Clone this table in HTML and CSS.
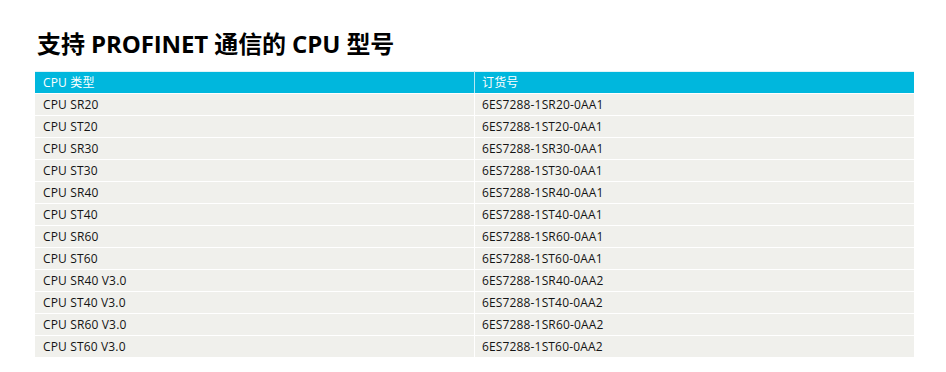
FILE: index.html
```html
<!DOCTYPE html>
<html lang="zh">
<head>
<meta charset="utf-8">
<link rel="stylesheet" href="styles.css">
</head>
<body>
<div class="page">
  <h1 class="title">支持 PROFINET 通信的 CPU 型号</h1>
  <table class="cpu-table">
    <thead>
      <tr><th>CPU 类型</th><th>订货号</th></tr>
    </thead>
    <tbody>
      <tr><td>CPU SR20</td><td>6ES7288-1SR20-0AA1</td></tr>
      <tr><td>CPU ST20</td><td>6ES7288-1ST20-0AA1</td></tr>
      <tr><td>CPU SR30</td><td>6ES7288-1SR30-0AA1</td></tr>
      <tr><td>CPU ST30</td><td>6ES7288-1ST30-0AA1</td></tr>
      <tr><td>CPU SR40</td><td>6ES7288-1SR40-0AA1</td></tr>
      <tr><td>CPU ST40</td><td>6ES7288-1ST40-0AA1</td></tr>
      <tr><td>CPU SR60</td><td>6ES7288-1SR60-0AA1</td></tr>
      <tr><td>CPU ST60</td><td>6ES7288-1ST60-0AA1</td></tr>
      <tr><td>CPU SR40 V3.0</td><td>6ES7288-1SR40-0AA2</td></tr>
      <tr><td>CPU ST40 V3.0</td><td>6ES7288-1ST40-0AA2</td></tr>
      <tr><td>CPU SR60 V3.0</td><td>6ES7288-1SR60-0AA2</td></tr>
      <tr><td>CPU ST60 V3.0</td><td>6ES7288-1ST60-0AA2</td></tr>
    </tbody>
  </table>
</div>
</body>
</html>
```
FILE: styles.css
```css
html, body {
  margin: 0;
  padding: 0;
  background: #ffffff;
}
.page {
  padding: 26px 32px 0 35px;
  font-family: "Open Sans", "Noto Sans CJK SC", sans-serif;
}
.title {
  margin: 0 0 9px 2px;
  font-size: 24px;
  line-height: 36px;
  font-weight: 700;
  color: #000000;
  letter-spacing: -0.1px;
  font-family: "Open Sans", "Noto Sans CJK SC", sans-serif;
}
.cpu-table {
  width: 879px;
  border-collapse: collapse;
  table-layout: fixed;
  font-size: 12px;
  letter-spacing: 0.15px;
}
.cpu-table th,
.cpu-table td {
  height: 21px;
  padding: 0 7px 0 8px;
  text-align: left;
  vertical-align: middle;
  line-height: 21px;
  border: 1px solid #ffffff;
  border-left: none;
  border-top: none;
}
.cpu-table th {
  background: #00b7dd;
  color: #ffffff;
  font-weight: 400;
  border-top: 1px solid #dff4f8;
  border-right-color: #b8e8f3;
}
.cpu-table td {
  background: #f0f0ec;
  color: #141414;
}
.cpu-table th:last-child,
.cpu-table td:last-child {
  border-right: none;
  padding-left: 7px;
}
.cpu-table tbody tr:last-child td {
  border-bottom: none;
}
```
